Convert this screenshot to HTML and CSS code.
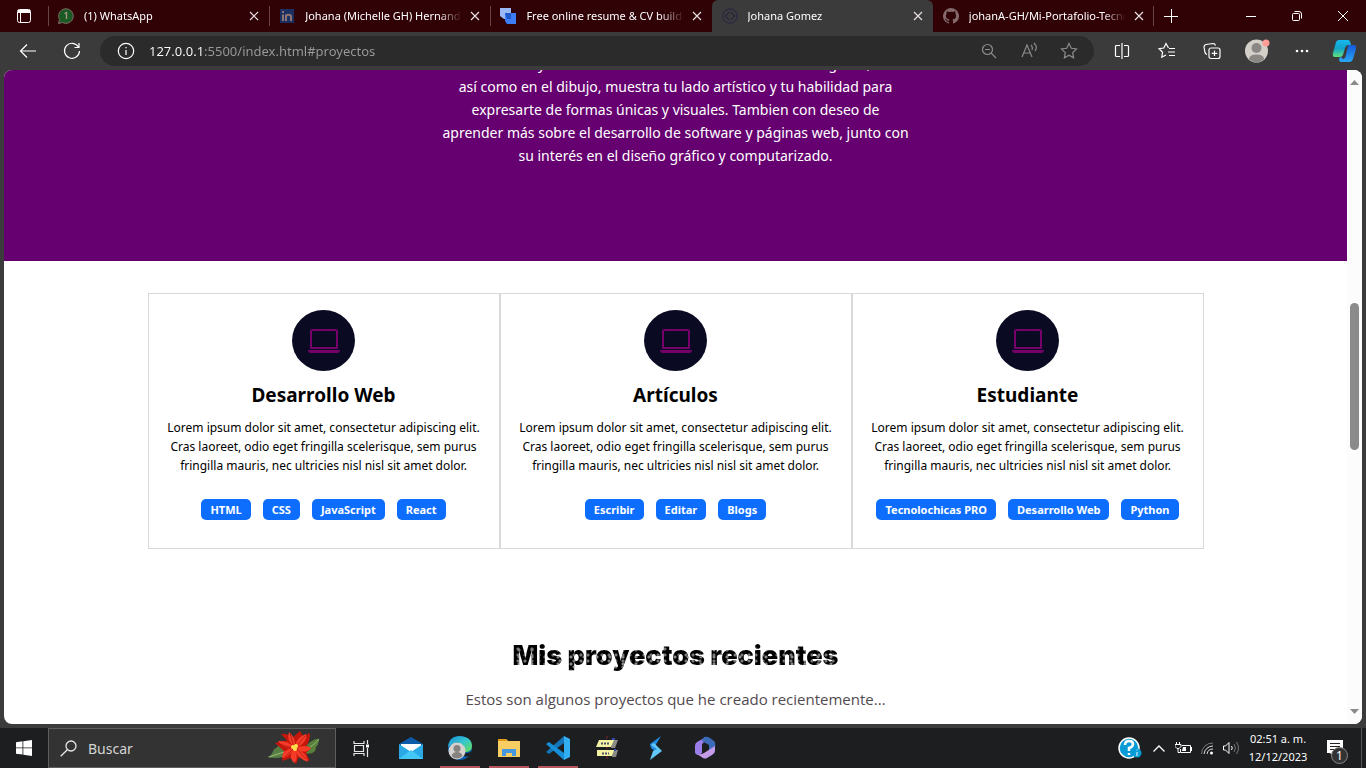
FILE: index.html
```html
<!DOCTYPE html>
<html lang="es">
<head>
<meta charset="utf-8">
<title>Johana Gomez</title>
<link rel="stylesheet" href="styles.css">
</head>
<body>
<header class="tabbar">
  <button class="tab-actions" aria-label="Acciones de pestaña"><svg width="16" height="16" viewBox="0 0 16 16" fill="none" stroke="#fff"><rect x="1.5" y="1.5" width="13" height="13" rx="2"/><path d="M2 3.500h12" stroke-width="3"/><path d="M4.500 5v9"/></svg></button>
  <nav class="tabs" aria-label="Pestañas">
    <div class="tab"><svg class="favicon" viewBox="0 0 16 16"><path d="M.5 15.500l1-4A7.300 7.300 0 1 1 4.500 14.500z" fill="#1b5a22" stroke="#806b68"/><path d="M6.500 5.500L8.500 4.500V11" stroke="#a99793" stroke-width="1.300" fill="none"/></svg><span class="tab-title">(1) WhatsApp</span><button class="close" aria-label="Cerrar WhatsApp"><svg viewBox="0 0 12 12"><path d="M2 2l8 8M10 2l-8 8"/></svg></button></div>
    <div class="tab"><svg class="favicon" viewBox="0 0 16 16"><rect x="1" y="1" width="14" height="14" fill="#1b2f63"/><path d="M4 6.500V13M4 3v2M7 13V6.500M7 9c0-3 5-3 5 0v4" stroke="#8d7471" stroke-width="2" fill="none"/></svg><span class="tab-title">Johana (Michelle GH) Hernandez</span><button class="close" aria-label="Cerrar Johana"><svg viewBox="0 0 12 12"><path d="M2 2l8 8M10 2l-8 8"/></svg></button></div>
    <div class="tab"><svg class="favicon" viewBox="0 0 16 16"><path d="M0 0h11v11H4l-4-3z" fill="#9bb9f5"/><path d="M5 5h11v11H7l-2-3z" fill="#3d7df5"/><path d="M5 5h6v6H7z" fill="#2059c9"/></svg><span class="tab-title">Free online resume &amp; CV builder</span><button class="close" aria-label="Cerrar Free online resume"><svg viewBox="0 0 12 12"><path d="M2 2l8 8M10 2l-8 8"/></svg></button></div>
    <div class="tab active"><svg class="favicon" viewBox="0 0 16 16" fill="none" stroke="#2b2840" stroke-width="1.300"><circle cx="8" cy="8" r="7.200"/><path d="M7.200 4L3.500 8l3.700 4M8.800 4l3.700 4-3.700 4"/></svg><span class="tab-title">Johana Gomez</span><button class="close" aria-label="Cerrar Johana Gomez"><svg viewBox="0 0 12 12"><path d="M2 2l8 8M10 2l-8 8"/></svg></button></div>
    <div class="tab"><svg class="favicon" viewBox="0 0 16 16"><path fill="#83696b" d="M8 0a8 8 0 0 0-2.530 15.590c.4.070.550-.170.550-.380v-1.490c-2 .370-2.530-.500-2.700-.950-.1-.230-.5-.950-.8-1.140-.3-.150-.7-.520 0-.530.6-.010 1.100.580 1.200.820.7 1.200 1.900.860 2.330.660.070-.520.280-.870.500-1.070-1.770-.200-3.640-.890-3.640-3.950 0-.870.310-1.590.820-2.150-.080-.200-.360-1.020.080-2.120 0 0 .670-.210 2.200.820a7.500 7.500 0 0 1 4 0c1.530-1.040 2.200-.820 2.200-.820.440 1.100.160 1.920.080 2.120.510.560.820 1.270.820 2.150 0 3.070-1.870 3.750-3.650 3.950.3.250.540.730.540 1.480v2.220c0 .210.150.460.550.380A8 8 0 0 0 8 0z"/></svg><span class="tab-title">johanA-GH/Mi-Portafolio-Tecnolochicas</span><button class="close" aria-label="Cerrar johanA-GH"><svg viewBox="0 0 12 12"><path d="M2 2l8 8M10 2l-8 8"/></svg></button></div>
  </nav>
  <button class="new-tab" aria-label="Nueva pestaña"><svg width="14" height="14" viewBox="0 0 14 14" stroke="#fff"><path d="M7.500 0v14M0 7.500h14"/></svg></button>
  <div class="window-controls">
    <button aria-label="Minimizar"><svg width="10" height="10" viewBox="0 0 10 10" stroke="#fff"><path d="M0 5.500h10"/></svg></button>
    <button aria-label="Restaurar"><svg width="10" height="10" viewBox="0 0 10 10" fill="none" stroke="#fff"><rect x=".5" y="2.500" width="7" height="7" rx="1"/><path d="M2.500.5H7A2.500 2.500 0 0 1 9.500 3v4.500"/></svg></button>
    <button aria-label="Cerrar ventana"><svg width="10" height="10" viewBox="0 0 10 10" stroke="#fff"><path d="M0 0l10 10M10 0L0 10"/></svg></button>
  </div>
</header>

<div class="toolbar">
  <div class="nav-buttons">
    <button aria-label="Atrás"><svg width="18" height="18" viewBox="0 0 18 18" class="line"><path d="M17 9H2M8 2.500L1.500 9 8 15.500"/></svg></button>
    <button aria-label="Actualizar"><svg width="18" height="18" viewBox="0 0 18 18" class="line"><path d="M15.500 5A7.500 7.500 0 1 0 16.500 9M16 1v4.500h-4.500"/></svg></button>
  </div>
  <form class="address">
    <svg width="18" height="18" viewBox="0 0 18 18" class="line"><circle cx="9" cy="9" r="7.700"/><path d="M9 8v5M9 5v1.300"/></svg>
    <input class="url" aria-label="Dirección" value="127.0.0.1:5500/index.html#proyectos">
    <button type="button" aria-label="Zoom"><svg width="16" height="16" viewBox="0 0 16 16" class="dim"><circle cx="6.500" cy="6.500" r="5"/><path d="M10.200 10.200L15 15M4 6.500h5"/></svg></button>
    <button type="button" aria-label="Leer en voz alta"><svg width="18" height="18" viewBox="0 0 18 18" class="dim"><path d="M2 15L7 3l5 12M3.800 11h6.500M11 3q2 2 1 5M14 1q4 4 1 8"/></svg></button>
    <button type="button" aria-label="Agregar a favoritos"><svg width="18" height="18" viewBox="0 0 18 18" class="dim"><path d="M9 1.500l2.300 4.800 5.200.7-3.800 3.600.9 5.200L9 13.300l-4.600 2.500.9-5.200L1.500 7l5.200-.7z"/></svg></button>
  </form>
  <div class="tools">
    <button aria-label="Pantalla dividida"><svg width="16" height="16" viewBox="0 0 16 16" class="line"><path d="M6 2.500H2.500a1 1 0 0 0-1 1v9a1 1 0 0 0 1 1H6M10 2.500h3.500a1 1 0 0 1 1 1v9a1 1 0 0 1-1 1H10M8 0v16"/></svg></button>
    <button aria-label="Favoritos"><svg width="18" height="18" viewBox="0 0 18 18" class="line"><path d="M10.500 6L8 1.500 5.800 6 1 6.700l3.600 3.500-.8 5L8 13M11 6.500h6M10 10h7M11 13.500h6"/></svg></button>
    <button aria-label="Colecciones"><svg width="18" height="18" viewBox="0 0 18 18" class="line"><rect x="6" y="6" width="11" height="10.500" rx="2"/><path d="M11.500 8.500V14M8.700 11.300h5.600M4 12.500q-1.500-.5-2-2L1 5q0-2 2-2.500L10 1.500q2 0 2.500 2"/></svg></button>
    <button aria-label="Perfil"><svg width="26" height="26" viewBox="0 0 26 26"><circle cx="12.500" cy="13" r="11.500" fill="#d3d0ca"/><circle cx="12.500" cy="10" r="5" fill="#8a8784"/><path d="M5 21.500q0-5 7.500-5t7.500 5q-7.500 5.500-15 0z" fill="#8a8784"/><circle cx="22" cy="5" r="3.500" fill="#ff9c96"/></svg></button>
    <button aria-label="Configuración y más"><svg width="14" height="4" viewBox="0 0 14 4" fill="#fff"><circle cx="2" cy="2" r="1.300"/><circle cx="7" cy="2" r="1.300"/><circle cx="12" cy="2" r="1.300"/></svg></button>
    <button aria-label="Copilot" class="copilot"><svg width="24" height="24" viewBox="0 0 24 24"><defs><linearGradient id="cp1" x2="0" y2="1"><stop stop-color="#16b9ef"/><stop offset=".5" stop-color="#12a3c9"/><stop offset="1" stop-color="#62df79"/></linearGradient><linearGradient id="cp2" x2="0" y2="1"><stop stop-color="#1558d8"/><stop offset="1" stop-color="#2aa8f5"/></linearGradient></defs><path d="M7 1h9q2 0 2.500 3l.5 2h-3q-2 0-3 3l-2 7q-1 2-3 2H3q-3 0-2-4L4 3q1-2 3-2z" fill="url(#cp1)"/><path d="M17 6h4q4 0 3 4l-3 10q-1 3-4 3H9q-2 0-2-3l1-2q2 0 3 2 2 0 3-4l1.500-7q.5-3 1.500-3z" fill="url(#cp2)"/></svg></button>
  </div>
</div>

<div class="viewport">
  <main class="page">
    <section class="hero">
      <p>Creativa y con talento en las artes visuales como fotografía,<br>así como en el dibujo, muestra tu lado artístico y tu habilidad para<br>expresarte de formas únicas y visuales. Tambien con deseo de<br>aprender más sobre el desarrollo de software y páginas web, junto con<br>su interés en el diseño gráfico y computarizado.</p>
    </section>
    <section class="cards">
      <article class="card">
        <svg class="card-icon" viewBox="0 0 63 61"><ellipse cx="31.500" cy="30.500" rx="31.500" ry="30.500" fill="#0a0a23"/><path d="M19 38V21.500a1.500 1.500 0 0 1 1.500-1.500h23a1.500 1.500 0 0 1 1.500 1.500V38z" fill="none" stroke="#750068" stroke-width="2"/><path d="M16 40h32q0 3-3 3H19q-3 0-3-3z" fill="#750068"/></svg>
        <h3>Desarrollo Web</h3>
        <p>Lorem ipsum dolor sit amet, consectetur adipiscing elit. Cras laoreet, odio eget fringilla scelerisque, sem purus fringilla mauris, nec ultricies nisl nisl sit amet dolor.</p>
        <div class="badges"><span>HTML</span><span>CSS</span><span>JavaScript</span><span>React</span></div>
      </article>
      <article class="card">
        <svg class="card-icon" viewBox="0 0 63 61"><ellipse cx="31.500" cy="30.500" rx="31.500" ry="30.500" fill="#0a0a23"/><path d="M19 38V21.500a1.500 1.500 0 0 1 1.500-1.500h23a1.500 1.500 0 0 1 1.500 1.500V38z" fill="none" stroke="#750068" stroke-width="2"/><path d="M16 40h32q0 3-3 3H19q-3 0-3-3z" fill="#750068"/></svg>
        <h3>Artículos</h3>
        <p>Lorem ipsum dolor sit amet, consectetur adipiscing elit. Cras laoreet, odio eget fringilla scelerisque, sem purus fringilla mauris, nec ultricies nisl nisl sit amet dolor.</p>
        <div class="badges"><span>Escribir</span><span>Editar</span><span>Blogs</span></div>
      </article>
      <article class="card">
        <svg class="card-icon" viewBox="0 0 63 61"><ellipse cx="31.500" cy="30.500" rx="31.500" ry="30.500" fill="#0a0a23"/><path d="M19 38V21.500a1.500 1.500 0 0 1 1.500-1.500h23a1.500 1.500 0 0 1 1.500 1.500V38z" fill="none" stroke="#750068" stroke-width="2"/><path d="M16 40h32q0 3-3 3H19q-3 0-3-3z" fill="#750068"/></svg>
        <h3>Estudiante</h3>
        <p>Lorem ipsum dolor sit amet, consectetur adipiscing elit. Cras laoreet, odio eget fringilla scelerisque, sem purus fringilla mauris, nec ultricies nisl nisl sit amet dolor.</p>
        <div class="badges"><span>Tecnolochicas PRO</span><span>Desarrollo Web</span><span>Python</span></div>
      </article>
    </section>
    <section class="projects">
      <h2>Mis proyectos recientes</h2>
      <p>Estos son algunos proyectos que he creado recientemente...</p>
    </section>
  </main>
  <div class="scrollbar" aria-hidden="true">
    <svg width="9" height="5" viewBox="0 0 9 5"><path d="M0 5L4.500 0 9 5z" fill="#8b8b8b"/></svg>
    <div class="track"><div class="thumb"></div></div>
    <svg width="9" height="5" viewBox="0 0 9 5"><path d="M0 0l4.500 5L9 0z" fill="#8b8b8b"/></svg>
  </div>
</div>

<footer class="taskbar">
  <button class="start" aria-label="Inicio"><svg width="16" height="16" viewBox="0 0 16 16" fill="#fff"><path d="M0 2.200l6.500-.9v6.200H0zM7.300 1.200L16 0v7.500H7.300zM0 8.300h6.500v6.300L0 13.700zM7.300 8.300H16V16l-8.700-1.200z"/></svg></button>
  <label class="search"><svg width="17" height="17" viewBox="0 0 17 17" fill="none" stroke="#e6e6e6" stroke-width="1.300"><circle cx="11" cy="6" r="5"/><path d="M7.300 9.700L.7 16.300"/></svg><input type="text" placeholder="Buscar" aria-label="Buscar">
    <svg width="54" height="34" viewBox="0 0 54 34"><path d="M1 26q5-1 7-8 4-1 6-7 6 8 10 12-10 6-23 3z" fill="#587f43"/><path d="M3 26q9-3 18-6" stroke="#9ebd79" fill="none"/><path d="M53 8q-3-1-10 4-5 4-7 10 14 3 14-6 3-3 3-8z" fill="#56803c"/><path d="M53 8q-6 8-15 11" stroke="#98b875" fill="none"/><path d="M28 17L15 3q6-1 11 4L34 0l3 5 7-3q0 9-4 13l5 2-5 5 4 8-11-4-3 7-5-6-9 3 2-10L9 12l13-3z" fill="#c5160c"/><path d="M28 16q-8-7-5-15 7 6 6 14 2-9 11-12 2 8-10 14 9-4 15 0-5 7-15 1 11 3 12 13-11-4-13-12 4 9-1 13-6-6-1-13-4 7-11 8 0-8 10-10-9 0-14-7 9-1 16 6z" fill="#f63b28"/><path d="M28 16l-4-14M30 16l9-11M30 17l10 11M27 18l-8 8M27 17l-14-4" stroke="#a51512" stroke-width=".7"/><g fill="#ffe14a"><circle cx="27" cy="16" r="2"/><circle cx="30" cy="15" r="2"/><circle cx="29" cy="18" r="2"/></g></svg>
  </label>
  <button class="task-view" aria-label="Vista de tareas"><svg width="17" height="17" viewBox="0 0 17 17" fill="none" stroke="#e8e8e8" stroke-width="1.200"><path d="M1 1v2.500h10V1M1 16v-2.500h10V16M1.500 5.500h9v6h-9zM14.500 0v4M14.500 8v9"/><path d="M13 4.500h3v3h-3z" fill="#fff" stroke="none"/></svg></button>
  <nav class="apps" aria-label="Aplicaciones">
    <button aria-label="Correo"><svg width="24" height="24" viewBox="0 0 24 24"><path d="M0 8L12 1l12 7v14H0z" fill="#0d5ba8"/><path d="M2 8h20v8L12 19 2 16z" fill="#fff"/><path d="M0 8l12 8 12-8v15H0z" fill="#2aa9e6"/><path d="M0 23l12-9 12 9z" fill="#43c8f5"/></svg></button>
    <button aria-label="Edge" class="running"><svg width="24" height="24" viewBox="0 0 24 24"><defs><linearGradient id="ed" x2="1" y2="1"><stop stop-color="#178fd7"/><stop offset=".5" stop-color="#36c5cf"/><stop offset="1" stop-color="#65df50"/></linearGradient></defs><circle cx="12" cy="12" r="12" fill="#0d5cab"/><path d="M0 11Q1 0 12 0q12 1 12 10 0 6-7 6h-4q4-4 0-8T0 11z" fill="url(#ed)"/><path d="M24 14q-2 4-9 3v2q4 3 7 0z" fill="#1c1d1e"/><circle cx="9" cy="15" r="8.500" fill="#d5d3cf"/><circle cx="9" cy="12.500" r="3.500" fill="#85827f"/><path d="M3.500 20q1-4 5.500-4t5.500 4Q9 25 3.500 20z" fill="#85827f"/></svg></button>
    <button aria-label="Explorador de archivos" class="running"><svg width="22" height="20" viewBox="0 0 22 20"><path d="M0 1h8l2 2h12v16H0z" fill="#f8ce62"/><path d="M0 1h8l2 2H0z" fill="#e49b16"/><path d="M4 18v-7h14v7h-4v-3H8v3z" fill="#4597df"/></svg></button>
    <button aria-label="Visual Studio Code" class="running"><svg width="24" height="24" viewBox="0 0 24 24"><path d="M18 0L0 16l3 2L18 7z" fill="#1476b8"/><path d="M0 8l3-2 15 11v7z" fill="#168ed8"/><path d="M18 0l6 3v18l-6 3z" fill="#32aef3"/></svg></button>
    <button aria-label="PSeInt"><svg width="22" height="24" viewBox="0 0 22 24"><path d="M11 0v24" stroke="#7d2028" stroke-dasharray="3 2"/><path d="M17 4h5l-3 8h-4zM17 14h5l-2 7h-4z" fill="#8b8c83"/><path d="M3 4h15l-3 7H0zM1 14h17l-2 6H1z" fill="#f4f3a3"/><path d="M5 7.500h9M6 17.500h7" stroke="#50516a" stroke-width="2" stroke-dasharray="2 1"/><path d="M16 3h3M18 14h2" stroke="#3944b5" stroke-width="2"/></svg></button>
    <button aria-label="Streamlabs"><svg width="13" height="24" viewBox="0 0 13 24"><path d="M12 0L1 8l1 4 6 5 4-2-6-5z" fill="#248be5"/><path d="M1 24l3-9 4-2-6-4 3-2 8 8z" fill="#61c8f9"/></svg></button>
    <button aria-label="Microsoft 365"><svg width="22" height="24" viewBox="0 0 22 24"><path d="M12 1L3 6Q1 7 1 10v6q0 3 4 3l3-2V9q0-2 4-4l3-2z" fill="#9a7de8"/><path d="M10 1q3-1 6 1l4 3q2 2 1 7l-6 3V9L8 5z" fill="#3c6bb7"/><path d="M21 10v5q0 2-3 4l-5 3q-2 1-4 0l-6-4q4 1 7-1z" fill="#c69bea"/></svg></button>
  </nav>
  <div class="tray">
    <button class="help" aria-label="Ayuda"><svg width="24" height="22" viewBox="0 0 24 22"><circle cx="11" cy="11" r="10" fill="#079bd7" stroke="#fff" stroke-width="1.500"/><path d="M7 8q0-4 4-4t4 3-4 4v3M11 16v2" stroke="#fff" stroke-width="2.500" fill="none"/><circle cx="19" cy="16" r="4.500" fill="#079bd7"/><path d="M19 15v4M19 12.500v1" stroke="#fff"/></svg></button>
    <button aria-label="Iconos ocultos"><svg width="12" height="7" viewBox="0 0 12 7" fill="none" stroke="#fff" stroke-width="1.300"><path d="M.5 6.500L6 1l5.500 5.500"/></svg></button>
    <button aria-label="Batería"><svg width="17" height="12" viewBox="0 0 17 12" fill="none" stroke="#fff"><path d="M7 3.500h8.500v7h-10V7M16.500 5v4M1.500 0v2M4.500 0v2M0 2.500h6v2l-2 2H2l-2-2zM3 6v4.500h2"/><path d="M8 5h3v4H7z" fill="#fff" stroke="none"/></svg></button>
    <button aria-label="Red"><svg width="14" height="14" viewBox="0 0 14 14" fill="none" stroke="#9b9b9b"><path d="M1.500 13A11 11 0 0 1 13 2" stroke="#777"/><path d="M4 13a9 9 0 0 1 9-8M7 13a6 6 0 0 1 6-5" stroke="#ddd"/><circle cx="11.500" cy="12" r="1.500" fill="#fff" stroke="none"/></svg></button>
    <button aria-label="Volumen"><svg width="16" height="14" viewBox="0 0 16 14" fill="none" stroke="#fff"><path d="M.5 5h2L6 1.500v11L2.500 9h-2zM8.500 5q1.500 2 0 4"/><path d="M11 3q3 4 0 8M13.500 1q4 6 0 12" stroke="#777"/></svg></button>
    <time class="clock" datetime="2023-12-12T02:51"><span>02:51 a. m.</span><span>12/12/2023</span></time>
    <button class="notify" aria-label="1 notificación"><svg width="16" height="16" viewBox="0 0 16 16"><path d="M0 0h16v13H6v3l-3-3H0z" fill="#fff"/><path d="M3 3.500h10M3 6.500h10M3 9.500h6" stroke="#222"/></svg><span class="count">1</span></button>
  </div>
</footer>
</body>
</html>
```
FILE: styles.css
```css
* { box-sizing: border-box; }

body {
  margin: 0;
  height: 100vh;
  display: flex;
  flex-direction: column;
  overflow: hidden;
  background: #3b3b3b;
  color: #fff;
  font-family: "Noto Sans", "Open Sans", sans-serif;
  font-size: 11px;
}

button {
  display: flex;
  align-items: center;
  justify-content: center;
  padding: 0;
  border: 0;
  background: none;
  color: inherit;
  font: inherit;
}

input {
  padding: 0;
  border: 0;
  outline: 0;
  background: none;
  font: inherit;
}

svg { flex: none; }

.line { fill: none; stroke: #fff; stroke-width: 1.2; }
.dim { fill: none; stroke: #8c8c8c; stroke-width: 1.2; }

.tabbar {
  display: flex;
  flex: none;
  height: 32px;
  background: #300206;
}

.tab-actions { width: 48px; }

.tabs {
  display: flex;
  flex: 0 1 1106px;
  min-width: 0;
}

.tab {
  display: flex;
  flex: 1 1 0;
  align-items: center;
  min-width: 0;
  padding: 0 9px 0 10px;
  background: linear-gradient(#6a4547, #6a4547) left center / 1px 20px no-repeat;
}

.tab:last-child {
  background: linear-gradient(#6a4547, #6a4547) right center / 1px 20px no-repeat;
}

.tab.active {
  border-radius: 6px 6px 0 0;
  background: #3b3b3b;
}

.favicon { width: 16px; height: 16px; margin-right: 10px; }

.tab-title {
  flex: 1;
  overflow: hidden;
  white-space: nowrap;
  line-height: 16px;
  mask-image: linear-gradient(to right, #000 calc(100% - 24px), transparent);
}

.close { width: 12px; height: 12px; margin-left: 7px; }
.close svg { width: 12px; height: 12px; stroke: #e8e0e0; stroke-width: 1.2; }

.new-tab { width: 34px; }

.window-controls { display: flex; margin-left: auto; }
.window-controls button { width: 46px; }

.toolbar {
  display: flex;
  flex: none;
  align-items: center;
  height: 38px;
  padding: 0 2px 0 6px;
}

.nav-buttons, .tools { display: flex; }
.nav-buttons button { width: 44px; }
.nav-buttons { margin-right: 6px; }

.address {
  display: flex;
  flex: 1;
  align-items: center;
  height: 30px;
  padding: 0 5px 0 17px;
  border-radius: 15px;
  background: #2b2b2b;
}

.address button { width: 40px; height: 30px; }

.url {
  flex: 1;
  min-width: 0;
  margin-left: 14px;
  background: linear-gradient(to right, #fff 55px, #9a9a9a 55px);
  background-clip: text;
  color: transparent;
  font-size: 13px;
}

.tools { margin-left: 5px; }
.tools button { width: 45px; }
.tools .copilot { width: 40px; }

.viewport {
  display: flex;
  flex: 1;
  min-height: 0;
  margin: 0 4px 4px;
  border-radius: 8px;
  overflow: hidden;
  background: #fff;
}

.page {
  flex: 1;
  min-width: 0;
  overflow: hidden;
  color: #000;
  text-align: center;
}

.page h2, .page h3, .page p { margin: 0; }

.hero {
  margin-top: -18px;
  padding: 0 16px 94px;
  background: #660070;
  color: #fff;
  font-size: 14px;
  line-height: 23px;
}

.cards {
  display: grid;
  grid-template-columns: repeat(3, 1fr);
  max-width: 1056px;
  margin: 32px auto 0;
}

.card {
  padding: 16px 16px 28px;
  border: 1px solid #d9d9d9;
}

.card-icon { display: block; width: 63px; height: 61px; margin: 0 auto; }
.card h3 { margin-top: 12px; font-size: 19px; line-height: 24px; }
.card p { margin-top: 11px; font-size: 12px; line-height: 19px; }

.badges {
  display: flex;
  justify-content: center;
  gap: 12px;
  margin-top: 24px;
}

.badges span {
  padding: 0 9px;
  border-radius: 5px;
  background: #0d6efd;
  color: #fff;
  font-size: 11px;
  font-weight: 700;
  line-height: 21px;
  white-space: nowrap;
}

.projects { padding-top: 91px; }

.projects h2 {
  background:
    radial-gradient(circle at 3px 3px, #777b79 0 1px, transparent 2px) 0 0 / 7px 6px,
    radial-gradient(circle at 8px 3px, #8e8a86 0 1px, transparent 2px) 0 0 / 13px 7px,
    #000;
  background-clip: text;
  color: transparent;
  font-family: Inter, sans-serif;
  font-size: 27px;
  font-weight: 900;
  line-height: 32px;
}

.projects p {
  margin-top: 16px;
  color: #524a4e;
  font-family: "Open Sans", sans-serif;
  font-size: 15px;
  font-weight: 500;
  line-height: 23px;
}

.scrollbar {
  display: flex;
  flex: none;
  flex-direction: column;
  align-items: center;
  width: 15px;
  padding: 10px 0;
  background: #fcfcfc;
}

.track { flex: 1; padding-top: 218px; }
.thumb { width: 9px; height: 147px; border-radius: 5px; background: #8b8b8b; }

.taskbar {
  display: flex;
  flex: none;
  height: 40px;
  background: #1c1e20;
}

.start { width: 48px; }

.search {
  display: flex;
  align-items: center;
  width: 288px;
  padding: 0 15px 0 11px;
  border: 1px solid #5e5e5e;
  background: #333;
}

.search input {
  flex: 1;
  min-width: 0;
  margin-left: 11px;
  color: #ddd;
  font-size: 14px;
}

.search input::placeholder { color: #d5d5d5; }

.task-view { width: 50px; }
.apps { display: flex; }
.apps button { width: 49px; }
.apps .running { background: linear-gradient(#b6555d, #b6555d) center bottom / 40px 2px no-repeat; }

.tray { display: flex; margin-left: auto; margin-right: 4px; padding-right: 5px; border-right: 1px solid #555; }
.tray button { width: 24px; }
.tray .help { width: 34px; }

.clock {
  display: flex;
  flex-direction: column;
  justify-content: center;
  width: 70px;
  text-align: center;
  line-height: 18px;
}

.tray .notify { position: relative; width: 43px; }

.count {
  position: absolute;
  left: 18px;
  top: 19px;
  width: 17px;
  height: 17px;
  border: 1px solid #888;
  border-radius: 50%;
  background: #333;
  font-size: 12px;
  line-height: 15px;
}
```
